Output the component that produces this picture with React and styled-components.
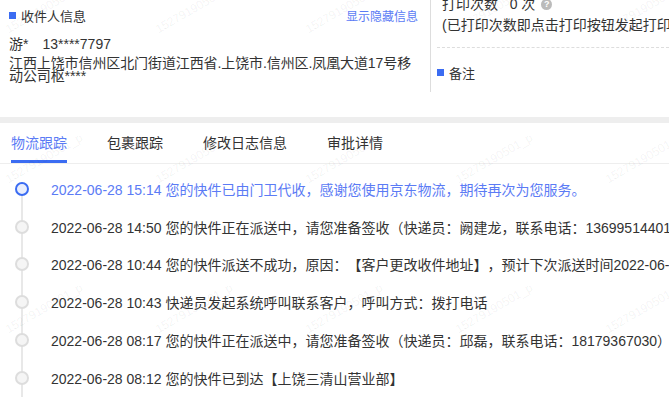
import React from 'react';
import styled, { createGlobalStyle } from 'styled-components';

const colors = {
  text: '#333333',
  blue: '#3b6cf2',
  blueText: '#5b7bf5',
  line: '#e6e6e6',
  band: '#eeeeee',
};

const GlobalStyle = createGlobalStyle`
  html, body {
    margin: 0;
    padding: 0;
    background: #ffffff;
  }
  body {
    font-family: "Liberation Sans", "Noto Sans CJK SC", sans-serif;
    color: ${colors.text};
    overflow: hidden;
    text-spacing-trim: space-all;
  }
`;

const tracks = [
  { time: '2022-06-28 15:14', text: '您的快件已由门卫代收，感谢您使用京东物流，期待再次为您服务。', active: true },
  { time: '2022-06-28 14:50', text: '您的快件正在派送中，请您准备签收（快递员：阙建龙，联系电话：13699514401）' },
  { time: '2022-06-28 10:44', text: '您的快件派送不成功，原因：【客户更改收件地址】，预计下次派送时间2022-06-28' },
  { time: '2022-06-28 10:43', text: '快递员发起系统呼叫联系客户，呼叫方式：拨打电话' },
  { time: '2022-06-28 08:17', text: '您的快件正在派送中，请您准备签收（快递员：邱磊，联系电话：18179367030）' },
  { time: '2022-06-28 08:12', text: '您的快件已到达【上饶三清山营业部】' },
];

const tabs = ['物流跟踪', '包裹跟踪', '修改日志信息', '审批详情'];

export default function App() {
  return (
    <Page>
      <GlobalStyle />
      <InfoRow>
        <ReceiverCard>
          <CardHeader>
            <Title>收件人信息</Title>
            <LinkText>显示隐藏信息</LinkText>
          </CardHeader>
          <NameLine>
            <span>游*</span>
            <Phone>13****7797</Phone>
          </NameLine>
          <Address>江西上饶市信州区北门街道江西省.上饶市.信州区.凤凰大道17号移动公司枢****</Address>
        </ReceiverCard>

        <PrintCard>
          <PrintLine>
            打印次数&nbsp;&nbsp;&nbsp;0 次
            <HelpIcon>?</HelpIcon>
          </PrintLine>
          <PrintNote>(已打印次数即点击打印按钮发起打印的次数)</PrintNote>
          <DashedLine />
          <Title>备注</Title>
        </PrintCard>
      </InfoRow>

      <Band />

      <TabBar>
        {tabs.map((t, i) => (
          <Tab key={t} $active={i === 0}>{t}</Tab>
        ))}
      </TabBar>

      <Timeline>
        {tracks.map((item) => (
          <TrackItem key={item.time}>
            <Dot $active={item.active} />
            <TrackText $active={item.active}>
              {item.time} {item.text}
            </TrackText>
          </TrackItem>
        ))}
      </Timeline>

      <Watermark>
        {Array.from({ length: 15 }).map((_, i) => (
          <Mark key={i}>15279190501_p</Mark>
        ))}
      </Watermark>
    </Page>
  );
}

const Page = styled.div`
  position: relative;
  width: 669px;
  height: 399px;
  overflow: hidden;
  background: #fff;
`;

const InfoRow = styled.div`
  display: flex;
  height: 92px;
  margin-bottom: 25px;
`;

const ReceiverCard = styled.div`
  width: 431px;
  flex-shrink: 0;
  box-sizing: border-box;
  padding: 7px 12px 0 9px;
  border-right: 1px solid #dddddd;
`;

const CardHeader = styled.div`
  display: flex;
  justify-content: space-between;
  align-items: center;
  height: 16px;
  margin-bottom: 13px;
`;

const Title = styled.div`
  display: flex;
  align-items: center;
  font-size: 13px;
  font-family: "Noto Sans CJK SC", sans-serif;
  color: ${colors.text};

  &::before {
    content: '';
    width: 7px;
    height: 7px;
    margin-right: 5px;
    background: ${colors.blue};
  }
`;

const LinkText = styled.span`
  font-size: 12px;
  font-family: "Noto Sans CJK SC", sans-serif;
  color: ${colors.blueText};
`;

const NameLine = styled.div`
  display: flex;
  font-size: 14px;
  line-height: 16px;
  margin-bottom: 5px;
`;

const Phone = styled.span`
  margin-left: 14px;
`;

const Address = styled.div`
  font-size: 14px;
  line-height: 13px;
  letter-spacing: -0.1px;
`;

const PrintCard = styled.div`
  flex: 1;
  padding: 0 0 0 6px;
  margin-top: -6px;
  min-width: 0;
  overflow: hidden;
`;

const PrintLine = styled.div`
  display: flex;
  align-items: center;
  padding-left: 5px;
  font-size: 14px;
  line-height: 20px;
  white-space: nowrap;
`;

const HelpIcon = styled.span`
  display: inline-flex;
  align-items: center;
  justify-content: center;
  width: 11px;
  height: 11px;
  margin-left: 6px;
  border-radius: 50%;
  background: #bbbbbb;
  color: #fff;
  font-size: 9px;
  font-weight: bold;
`;

const PrintNote = styled.div`
  padding-left: 5px;
  font-size: 14px;
  line-height: 22px;
  white-space: nowrap;
`;

const DashedLine = styled.div`
  margin: 11px 0 15px;
  border-top: 1px dashed #dddddd;
`;

const Band = styled.div`
  height: 6px;
  background: ${colors.band};
`;

const TabBar = styled.div`
  display: flex;
  gap: 40px;
  padding-left: 11px;
  border-bottom: 1px solid #eeeeee;
`;

const Tab = styled.div`
  font-family: "Noto Sans CJK SC", sans-serif;
  font-size: 14px;
  line-height: 16px;
  padding: 11px 0 10px;
  color: ${({ $active }) => ($active ? colors.blueText : colors.text)};
  border-bottom: 3px solid ${({ $active }) => ($active ? colors.blue : 'transparent')};
`;

const Timeline = styled.div`
  display: flex;
  flex-direction: column;
  padding-top: 6px;
`;

const TrackItem = styled.div`
  position: relative;
  display: flex;
  align-items: center;
  height: 37.8px;

  &::before {
    content: '';
    position: absolute;
    left: 21px;
    top: 0;
    bottom: 0;
    width: 2px;
    background: #e8e8e8;
  }

  &:first-child::before {
    top: 50%;
  }
`;

const Dot = styled.span`
  position: relative;
  z-index: 1;
  flex-shrink: 0;
  box-sizing: border-box;
  width: 14px;
  height: 14px;
  margin-left: 15px;
  border-radius: 50%;
  border: 2px solid ${({ $active }) => ($active ? colors.blue : '#dddddd')};
  background: ${({ $active }) => ($active ? '#e9eefd' : '#f5f5f5')};
`;

const TrackText = styled.span`
  flex-shrink: 0;
  margin-left: 22px;
  font-size: 14px;
  white-space: nowrap;
  color: ${({ $active }) => ($active ? colors.blueText : colors.text)};
`;

const Watermark = styled.div`
  position: absolute;
  inset: 0;
  display: grid;
  grid-template-columns: repeat(5, 150px);
  grid-auto-rows: 150px;
  padding: 0 0 0 10px;
  pointer-events: none;
`;

const Mark = styled.span`
  align-self: start;
  justify-self: start;
  margin-top: 22px;
  font-size: 12px;
  color: rgba(0, 0, 0, 0.06);
  transform: rotate(-30deg);
  transform-origin: left bottom;
  white-space: nowrap;
`;
